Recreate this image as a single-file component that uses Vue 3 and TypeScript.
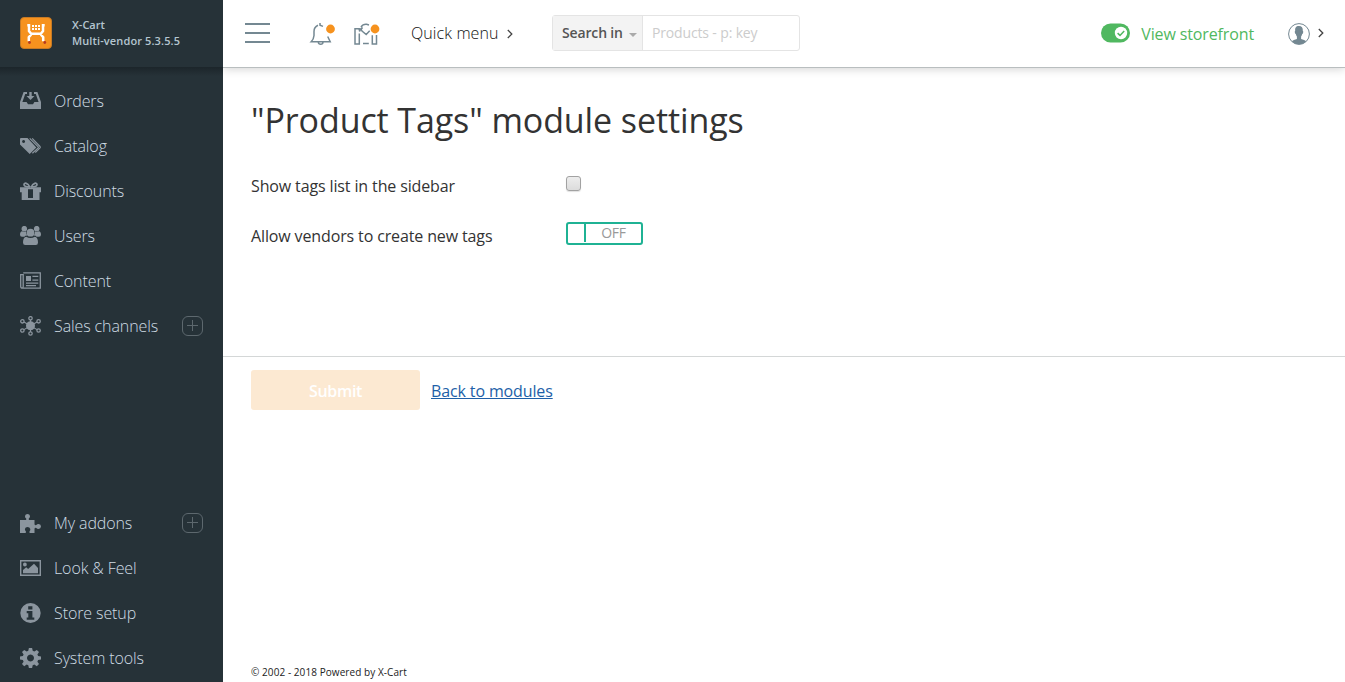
<script setup lang="ts">
interface Shape { d: string; stroke?: number; dark?: boolean }
interface Item { label: string; shapes: Shape[]; plus?: boolean }

const top: Item[] = [
  { label: 'Orders', shapes: [
    { d: 'M3.6 1H7V3H5.2L2.4 11H6.6L8 13.2H13L14.4 11H18.6L15.8 3H14V1H17.4L21 11V18H0V11Z' },
    { d: 'M9.3 1H11.7V5H14.5L10.5 9L6.5 5H9.3Z' } ] },
  { label: 'Catalog', shapes: [
    { d: 'M0 3V8.6L9.7 18L16.3 11.4L7.5 2H1Q0 2 0 3ZM3.6 3.9A1.5 1.5 0 1 1 3.59 3.9Z' },
    { d: 'M9.7 2.3L18.2 10.8Q18.6 11.4 18.2 11.9L12.4 17.3', stroke: 1.2 },
    { d: 'M12.2 2.3L20 10.5Q20.5 11.2 20 11.8L15.3 16.5', stroke: 1.2 } ] },
  { label: 'Discounts', shapes: [
    { d: 'M0 6.2H21V11.2H19.5V19H1.7V11.2H0ZM8 8.2V17H13V8.2Z' },
    { d: 'M9.8 6C8 2 4 1 4 3.8C4 6 8 6 10 6M11.2 6C13 2 17 1 17 3.8C17 6 13 6 11 6', stroke: 1.7 } ] },
  { label: 'Users', shapes: [
    { d: 'M1.5 2.7A2.8 2.8 0 1 1 7.1 2.7A2.8 2.8 0 1 1 1.5 2.7M13.9 2.7A2.8 2.8 0 1 1 19.5 2.7A2.8 2.8 0 1 1 13.9 2.7' },
    { d: 'M2.2 5.3Q4.3 6.5 6 5.5Q6 8 7.4 9.5Q5 9.5 4.4 10.7H2Q0 10.7 0 8.7Q0 5.5 2.2 5.3M18.8 5.3Q16.7 6.5 15 5.5Q15 8 13.6 9.5Q16 9.5 16.6 10.7H19Q21 10.7 21 8.7Q21 5.5 18.8 5.3' },
    { d: 'M6.6 6.7A3.9 3.9 0 1 1 14.4 6.7A3.9 3.9 0 1 1 6.6 6.7' },
    { d: 'M6.2 10.7Q10.5 13.3 14.8 10.7Q18 11.3 18 16.4Q18 18.9 15.8 18.9H5.2Q3 18.9 3 16.4Q3 11.3 6.2 10.7' } ] },
  { label: 'Content', shapes: [
    { d: 'M3.2 1.8H20.3V17.2H2.5Q.7 17.2 .7 15.5V3.6H3.2V15.5Q3.2 17 2.2 17', stroke: 1.3 },
    { d: 'M6 5H11V10H6ZM12.4 4.8H18.3V6.1H12.4ZM12.4 8.4H18.3V9.7H12.4ZM6 11.4H18.3V12.7H6ZM6 14H16V15.2H6Z' } ] },
  { label: 'Sales channels', plus: true, shapes: [
    { d: 'M6 9.8A4.5 4.5 0 1 1 15 9.8A4.5 4.5 0 1 1 6 9.8' },
    { d: 'M10.5 4V16M4 6L17 13.6M17 6L4 13.6', stroke: 1.1 },
    { d: 'M8.8 2.3A1.7 1.7 0 1 1 12.2 2.3A1.7 1.7 0 1 1 8.8 2.3M8.8 17.5A1.7 1.7 0 1 1 12.2 17.5A1.7 1.7 0 1 1 8.8 17.5M.7 5.3A1.7 1.7 0 1 1 4.1 5.3A1.7 1.7 0 1 1 .7 5.3M16.9 5.3A1.7 1.7 0 1 1 20.3 5.3A1.7 1.7 0 1 1 16.9 5.3M.7 14.5A1.7 1.7 0 1 1 4.1 14.5A1.7 1.7 0 1 1 .7 14.5M16.9 14.5A1.7 1.7 0 1 1 20.3 14.5A1.7 1.7 0 1 1 16.9 14.5', stroke: 1.3 } ] },
]
const bottom: Item[] = [
  { label: 'My addons', plus: true, shapes: [
    { d: 'M0 7H5.8Q6.7 6.6 6.2 5.5Q4.8 4.6 5 3Q5.4 1 7.5 1Q9.6 1 10 3Q10.1 4.7 8.8 5.5Q8.3 6.6 9.3 7H14.5V11.3Q15 12.5 16.3 12Q17 11 18.7 11Q21 11.2 21 13.5Q20.8 15.8 18.5 16Q17 15.9 16.3 15Q15 14.5 14.5 15.7V20H9.7Q9.1 19.2 9.7 18Q10.5 17.3 10.3 15.9Q9.7 14 7.5 14Q5.3 14 4.9 15.9Q4.8 17.2 5.7 18Q6.3 19.2 5.6 20H0Z' } ] },
  { label: 'Look & Feel', shapes: [
    { d: 'M.7 2.7H20.3V17.3H.7Z', stroke: 1.4 },
    { d: 'M3 15.2V12L6.2 9.3L8.1 11L14 5.8L18 9.9V15.2ZM3 6.5A1.9 1.9 0 1 1 6.8 6.5A1.9 1.9 0 1 1 3 6.5' } ] },
  { label: 'Store setup', shapes: [
    { d: 'M.3 10A10.2 9.9 0 1 1 20.7 10A10.2 9.9 0 1 1 .3 10' },
    { d: 'M8.2 3.2H12.4V6.5H8.2ZM6.7 8H12.4V14.4H14.3V16.7H6.7V14.4H8.3V10.2H6.7Z', dark: true } ] },
  { label: 'System tools', shapes: [
    { d: 'M8.9 0H12.1L12.7 2.8L14.3 3.5L16.8 1.9L19 4L17.4 6.4L18.1 8.1L21 8.6V11.6L18.1 12.1L17.4 13.7L19 16.1L16.8 18.2L14.3 16.6L12.7 17.3L12.1 20H8.9L8.3 17.3L6.7 16.6L4.2 18.2L2 16.1L3.6 13.7L2.9 12.1L0 11.6V8.6L2.9 8.1L3.6 6.4L2 4L4.2 1.9L6.7 3.5L8.3 2.8ZM10.5 6.6A3.5 3.5 0 1 0 10.51 6.6Z' } ] },
]
const groups = [top, bottom]
</script>

<template>
  <div class="page">
    <aside class="sidebar">
      <div class="brand">
        <svg class="logo" width="32" height="32" viewBox="0 0 32 32">
          <rect x=".5" y=".5" width="31" height="31" rx="3.5" fill="#f6921e" stroke="#c67a25" />
          <path d="M7.3 8.3H9V14L11.2 16.7H20.8L23 14V8.3H24.7M11.2 17.5L8.8 20.3V24.2M20.8 17.5L23.2 20.3V24.2" fill="none" stroke="#fff" stroke-width="2.5" />
          <path d="M12 8h2v2h-2zm3 0h2v2h-2zm3 0h2v2h-2zM12 11h2v2h-2zm3 0h2v2h-2zm3 0h2v2h-2z" fill="#fff" />
          <circle cx="9.5" cy="25.5" r="1.4" fill="#b53a22" /><circle cx="24.8" cy="25.5" r="1.4" fill="#b53a22" />
        </svg>
        <div class="brand-text"><div>X-Cart</div><div class="edition">Multi-vendor 5.3.5.5</div></div>
      </div>
      <nav class="menu">
        <ul v-for="(group, g) in groups" :key="g">
          <li v-for="item in group" :key="item.label">
            <svg width="21" height="20" viewBox="0 0 21 20">
              <path v-for="(s, i) in item.shapes" :key="i" :d="s.d" fill-rule="evenodd"
                :fill="s.stroke ? 'none' : s.dark ? '#263238' : '#8b959e'"
                :stroke="s.stroke ? '#8b959e' : 'none'" :stroke-width="s.stroke" />
            </svg>
            <span class="label">{{ item.label }}</span>
            <svg v-if="item.plus" class="plus" width="21" height="20" viewBox="0 0 21 20">
              <rect x=".5" y=".5" width="20" height="19" rx="5.5" /><path d="M5 9.5H16M10.5 4V15" />
            </svg>
          </li>
        </ul>
      </nav>
    </aside>

    <div class="column">
      <header class="header">
        <div class="burger"><i></i><i></i><i></i></div>
        <svg class="bell" width="27" height="24" viewBox="0 0 27 24">
          <g fill="none" stroke="#748892" stroke-width="1.5">
            <path d="M11 1V3.3L14 4.4M9 3.3Q5 5 5 9.5V13.5Q4.8 17 2.2 19.7H21.2L18.7 14.5M9.3 20.3Q9.5 22.3 11.7 22.3T14 20.3" />
          </g>
          <circle cx="21.5" cy="7" r="4.4" fill="#f6921e" />
        </svg>
        <svg class="market" width="27" height="24" viewBox="0 0 27 24">
          <g fill="none" stroke="#748892" stroke-width="1.5">
            <path d="M6.2 7.5V5.7H2V20.9H6.3V10.5M6.5 8.6Q7.3 5 9.8 5M8 4Q10 .9 13.5 1.2L16 2M8 6L9 8.1L13.2 11.5L16.7 7.8M10 20.5H15.8M19.3 12.3V20.9H23.5V12" />
          </g>
          <circle cx="22" cy="6" r="4.4" fill="#f6921e" />
        </svg>
        <div class="quick"><span>Quick menu</span>
          <svg width="6" height="10" viewBox="0 0 6 10"><path d="M.8 1L4.8 5L.8 9" fill="none" stroke="#444" stroke-width="1.3" /></svg>
        </div>
        <div class="search">
          <div class="search-in"><span>Search in</span><i></i></div>
          <div class="search-field">Products - p: key</div>
        </div>
        <div class="storefront">
          <svg width="30" height="20" viewBox="0 0 30 20">
            <rect x="0" y=".5" width="29" height="19" rx="9.5" fill="#50b860" />
            <circle cx="20" cy="10" r="6.2" fill="#fff" />
            <path d="M16.6 10.1L19 12.4L23.2 8" fill="none" stroke="#50b860" stroke-width="1.5" />
          </svg>
          <span>View storefront</span>
        </div>
        <svg class="user" width="22" height="22" viewBox="0 0 22 22">
          <circle cx="11" cy="11" r="10.4" fill="#fff" stroke="#738791" stroke-width="1" />
          <path d="M11 3C7.7 3 6.9 5 7.2 8Q6.4 8 6.9 9.7Q7.2 11 7.8 11Q8.2 12.7 8.9 13.4V16Q5.5 17.1 3.7 18.3Q6.7 21.3 11 21.3T18.3 18.3Q16.5 17.1 13.1 16V13.4Q13.8 12.7 14.2 11Q14.8 11 15.1 9.7Q15.6 8 14.8 8Q15.1 3 11 3" fill="#738791" />
        </svg>
        <svg class="user-chev" width="6" height="10" viewBox="0 0 6 10"><path d="M.8 1L4.8 5L.8 9" fill="none" stroke="#444" stroke-width="1.3" /></svg>
      </header>

      <main class="main">
        <h1>"Product Tags" module settings</h1>
        <div class="row"><span class="name">Show tags list in the sidebar</span><span class="check"></span></div>
        <div class="row"><span class="name">Allow vendors to create new tags</span>
          <span class="switch"><i></i><b>OFF</b></span></div>
      </main>
      <div class="actions">
        <button class="submit" type="button">Submit</button>
        <a>Back to modules</a>
      </div>
      <footer>© 2002 - 2018 Powered by X-Cart</footer>
    </div>
  </div>
</template>

<style>
body { margin: 0; background: #fff; }
</style>
<style scoped>
* { box-sizing: border-box; }
.page { display: flex; width: 100%; height: 682px; overflow: hidden; font: 16px/24px "Open Sans", sans-serif; color: #333; white-space: nowrap; }
.sidebar { width: 223px; flex: none; background: #263238; display: flex; flex-direction: column; }
.brand { height: 67px; display: flex; padding: 17px 0 0 20px; flex: none; }
.brand-text { margin-left: 20px; font-size: 11px; line-height: 16px; font-weight: 600; color: #b5c6d0; }
.edition { letter-spacing: .12px; }
.menu { flex: 1; display: flex; flex-direction: column; justify-content: space-between; padding: 11px 0 2px; background: linear-gradient(#1c252a, #263238 9px); }
ul { list-style: none; margin: 0; padding: 0; }
li { height: 45px; display: flex; align-items: center; padding: 0 20px; }
.label { margin-left: 13px; font-weight: 300; color: #cfdce4; letter-spacing: -.1px; }
.plus { margin-left: auto; fill: none; stroke: #5d686e; }
.column { flex: 1; min-width: 0; display: flex; flex-direction: column; }
.header { height: 68px; flex: none; border-bottom: 1px solid #b9bebf; box-shadow: 0 1px 9px rgba(0,0,0,.18); clip-path: inset(0 0 -14px 0); display: flex; align-items: flex-start; padding-left: 22px; }
.burger { width: 25px; margin-top: 23px; display: flex; flex-direction: column; gap: 7px; }
.burger i { height: 2px; background: #748892; }
.bell { margin: 22px 0 0 39px; }
.market { margin: 23px 0 0 17px; }
.quick { margin: 21px 0 0 31px; width: 141px; display: flex; font-weight: 300; align-items: center; gap: 8px; color: #111; }
.quick span { letter-spacing: .1px; }
.quick svg { margin-top: 2px; }
.search { width: 248px; height: 36px; margin-top: 15px; border: 1px solid #e4e4e4; border-radius: 3px; display: flex; font-size: 14px; line-height: 34px; }
.search-in { width: 90px; background: #f3f3f3; border-right: 1px solid #e4e4e4; padding-left: 9px; display: flex; align-items: center; gap: 6px; font-weight: 600; color: #555; }
.search-in span { letter-spacing: -.15px; }
.search-in i { border: 4.5px solid transparent; border-top-color: #aaa; border-bottom: 0; margin-top: 3px; }
.search-field { padding-left: 9px; color: #ccc; letter-spacing: -.15px; }
.storefront { margin: 22px 0 0 auto; display: flex; color: #50b860; gap: 10px; letter-spacing: -.13px; }
.storefront svg { margin-top: 1px; }
.user { margin: 23px 0 0 34px; }
.user-chev { margin: 28px 21px 0 8px; }
.main { height: 288px; flex: none; padding: 28px 28px 0; }
h1 { margin: 0 0 16px; font-size: 34px; line-height: 48px; font-weight: 400; color: #333; letter-spacing: -.1px; }
.row { display: flex; height: 50px; padding-top: 14px; }
.name { width: 315px; letter-spacing: -.13px; }
.check { width: 15px; height: 15px; border: 1px solid #a2a2a2; border-radius: 3px; background: linear-gradient(#ededed, #dcdcdc); box-shadow: 0 1px 1px rgba(0,0,0,.12); margin-top: 2px; }
.switch { width: 77px; height: 23px; border: 2px solid #1fb294; border-radius: 3px; display: flex; margin-top: -2px; }
.switch i { width: 18px; height: 18px; border-right: 2px solid #1fb294; }
.switch b { flex: 1; text-align: center; font: 400 14px/18px "Open Sans", sans-serif; color: #999; letter-spacing: -.2px; }
.actions { border-top: 1px solid #d4d7d7; padding: 13px 28px 0; display: flex; flex: 1; align-items: flex-start; }
.submit { width: 169px; height: 40px; border: 0; border-radius: 3px; background: #fce9d2; color: #fff; font: 600 16px/40px "Open Sans", sans-serif; letter-spacing: -.3px; padding: 1px 0 0; }
a { margin: 9px 0 0 11px; color: #1e5fa8; text-decoration: underline; letter-spacing: -.13px; }
footer { height: 20px; padding-left: 28px; font-size: 10px; line-height: 20px; color: #222; letter-spacing: .07px; }
</style>
